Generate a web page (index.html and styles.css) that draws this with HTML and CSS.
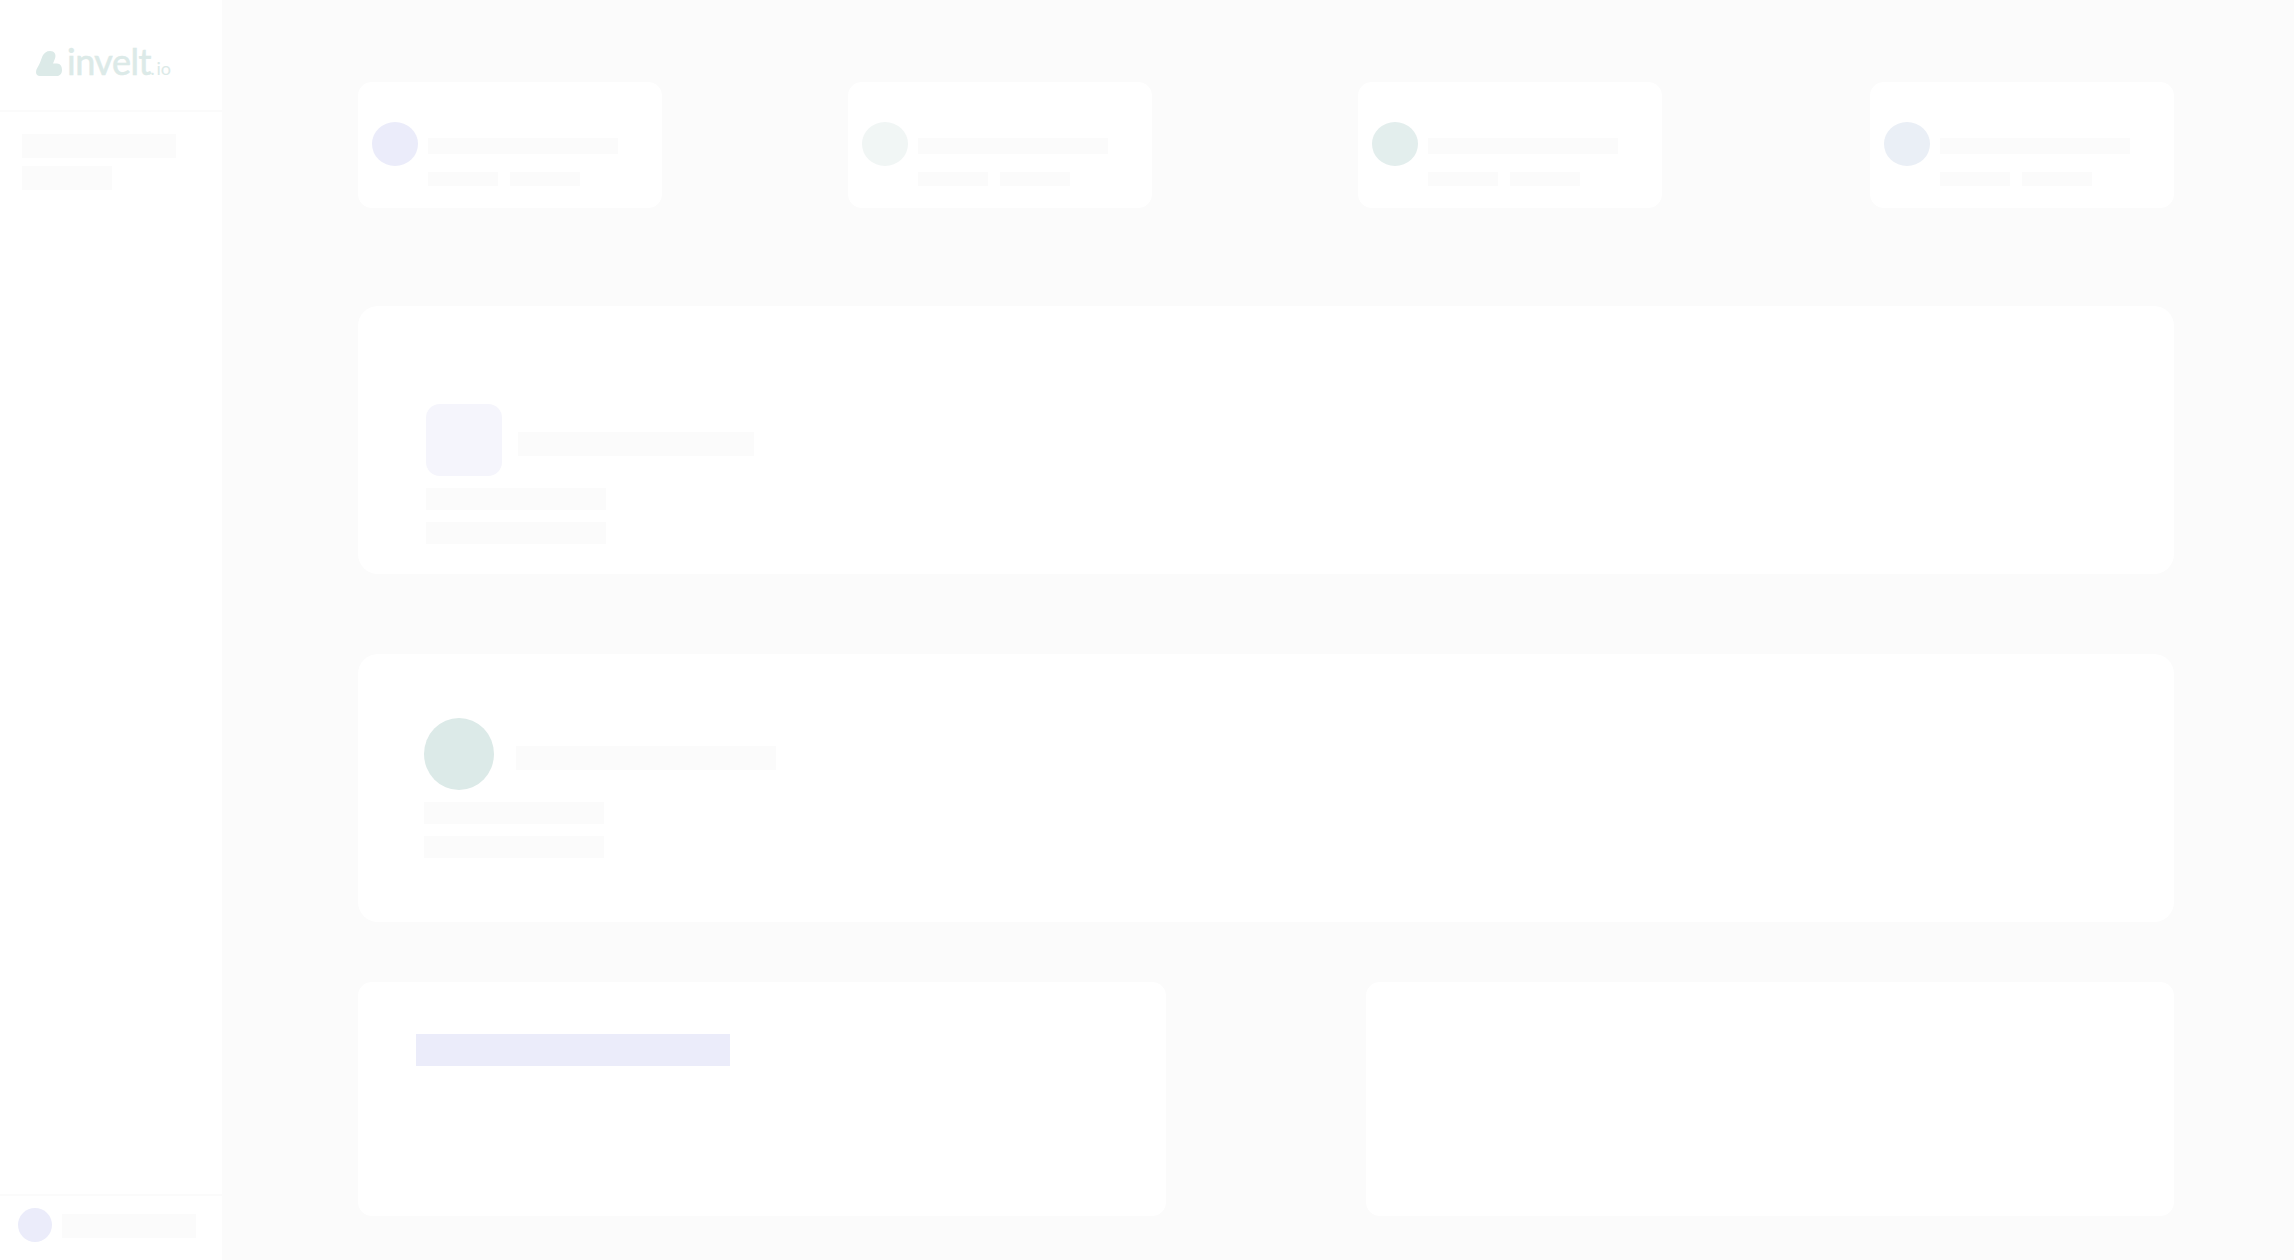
FILE: index.html
```html
<!DOCTYPE html>
<html lang="en">
<head>
    <meta charset="UTF-8">
    <meta name="viewport" content="width=device-width, initial-scale=1.0">
    <title>invelt.io</title>
    <link rel="stylesheet" href="styles.css">
</head>
<body>
    <aside class="sidebar">
        <div class="sidebar-logo">
            <svg class="logo-icon" width="26" height="25" viewBox="0 0 26 25">
                <path d="M6.500 5C8 2 10.500 0 14 0C18.500 0 20.500 3.500 19 7.500L17 12.500H21C24.500 12.500 26 15.500 26 19C26 22.500 24 25 21 25H4C1.500 25 0 23.500 0 21C0 19.500 0.500 18 1.500 16.500C3.500 13.500 5 9 6.500 5Z"/>
            </svg>
            <span class="logo-name">invelt</span><span class="logo-dot">.</span><span class="logo-tld">io</span>
        </div>
        <div class="sidebar-nav">
            <div class="skeleton nav-line-long"></div>
            <div class="skeleton nav-line-short"></div>
        </div>
        <div class="sidebar-user">
            <div class="user-avatar"></div>
            <div class="skeleton user-name"></div>
        </div>
    </aside>

    <main class="content">
        <div class="stat-row">
            <div class="stat-card">
                <div class="stat-icon stat-icon-lavender"></div>
                <div class="stat-text">
                    <div class="skeleton stat-title"></div>
                    <div class="stat-tags">
                        <div class="skeleton stat-tag"></div>
                        <div class="skeleton stat-tag"></div>
                    </div>
                </div>
            </div>
            <div class="stat-card">
                <div class="stat-icon stat-icon-mint"></div>
                <div class="stat-text">
                    <div class="skeleton stat-title"></div>
                    <div class="stat-tags">
                        <div class="skeleton stat-tag"></div>
                        <div class="skeleton stat-tag"></div>
                    </div>
                </div>
            </div>
            <div class="stat-card">
                <div class="stat-icon stat-icon-teal"></div>
                <div class="stat-text">
                    <div class="skeleton stat-title"></div>
                    <div class="stat-tags">
                        <div class="skeleton stat-tag"></div>
                        <div class="skeleton stat-tag"></div>
                    </div>
                </div>
            </div>
            <div class="stat-card">
                <div class="stat-icon stat-icon-blue"></div>
                <div class="stat-text">
                    <div class="skeleton stat-title"></div>
                    <div class="stat-tags">
                        <div class="skeleton stat-tag"></div>
                        <div class="skeleton stat-tag"></div>
                    </div>
                </div>
            </div>
        </div>

        <section class="panel panel-first">
            <div class="panel-head">
                <div class="panel-square"></div>
                <div class="skeleton panel-title-short"></div>
            </div>
            <div class="skeleton panel-line"></div>
            <div class="skeleton panel-line"></div>
        </section>

        <section class="panel panel-second">
            <div class="panel-head">
                <div class="panel-circle"></div>
                <div class="skeleton panel-title-long"></div>
            </div>
            <div class="skeleton panel-line"></div>
            <div class="skeleton panel-line"></div>
        </section>

        <div class="bottom-row">
            <section class="bottom-card bottom-card-titled">
                <div class="bottom-title"></div>
            </section>
            <section class="bottom-card"></section>
        </div>
    </main>
</body>
</html>
```
FILE: styles.css
```css
body {
    margin: 0;
    height: 100vh;
    display: flex;
    overflow: hidden;
    background-color: #fbfbfb;
    font-family: Lato, sans-serif;
}

.skeleton {
    background-color: #fbfbfb;
}

/* sidebar */
.sidebar {
    width: 222px;
    flex-shrink: 0;
    display: flex;
    flex-direction: column;
    background-color: #ffffff;
}
.sidebar-logo {
    height: 110px;
    box-sizing: content-box;
    display: flex;
    align-items: baseline;
    padding-left: 36px;
    border-bottom: 2px solid #fbfbfb;
    color: #dceae8;
    line-height: 122px;
}
.logo-icon {
    align-self: flex-start;
    margin-top: 51px;
    margin-right: 5px;
    fill: #dceae8;
}
.logo-name {
    font-size: 36px;
    font-weight: 400;
    letter-spacing: -0.5px;
    -webkit-text-stroke: 0.6px #dceae8;
}
.logo-dot {
    font-size: 15px;
    font-weight: 700;
    margin-right: 2px;
}
.logo-tld {
    font-size: 18px;
    font-weight: 400;
}
.sidebar-nav {
    display: flex;
    flex-direction: column;
    gap: 8px;
    padding: 22px;
}
.nav-line-long {
    width: 154px;
    height: 24px;
}
.nav-line-short {
    width: 90px;
    height: 24px;
}
.sidebar-user {
    margin-top: auto;
    height: 52px;
    display: flex;
    gap: 10px;
    padding: 12px 18px 0;
    border-top: 2px solid #fbfbfb;
}
.user-avatar {
    width: 34px;
    height: 34px;
    border-radius: 50%;
    background-color: #ebecfa;
}
.user-name {
    width: 134px;
    height: 24px;
    margin-top: 6px;
}

/* main area */
.content {
    flex: 1;
    padding: 82px 120px 0 136px;
}
.stat-row {
    display: grid;
    grid-template-columns: 490px 510px 512px 304px;
}
.stat-card {
    width: 304px;
    height: 126px;
    box-sizing: border-box;
    display: flex;
    gap: 10px;
    padding: 40px 14px 0;
    border-radius: 14px;
    background-color: #ffffff;
}
.stat-icon {
    width: 46px;
    height: 44px;
    border-radius: 50%;
}
.stat-icon-lavender {
    background-color: #ebecfa;
}
.stat-icon-mint {
    background-color: #f1f6f5;
}
.stat-icon-teal {
    background-color: #e3eeed;
}
.stat-icon-blue {
    background-color: #eaeff6;
}
.stat-text {
    display: flex;
    flex-direction: column;
    gap: 18px;
    padding-top: 16px;
}
.stat-title {
    width: 190px;
    height: 16px;
}
.stat-tags {
    display: flex;
    gap: 12px;
}
.stat-tag {
    width: 70px;
    height: 14px;
}

.panel {
    height: 268px;
    box-sizing: border-box;
    border-radius: 20px;
    background-color: #ffffff;
}
.panel-first {
    margin-top: 98px;
    padding: 98px 0 0 68px;
}
.panel-second {
    margin-top: 80px;
    padding: 64px 0 0 66px;
}
.panel-head {
    display: flex;
    align-items: flex-end;
    gap: 16px;
    margin-bottom: 12px;
}
.panel-square {
    width: 76px;
    height: 72px;
    border-radius: 14px;
    background-color: #f5f5fc;
}
.panel-circle {
    width: 70px;
    height: 72px;
    margin-right: 6px;
    border-radius: 50%;
    background-color: #dceae8;
}
.panel-title-short {
    width: 236px;
    height: 24px;
    margin-bottom: 20px;
}
.panel-title-long {
    width: 260px;
    height: 24px;
    margin-bottom: 20px;
}
.panel-line {
    width: 180px;
    height: 22px;
    margin-bottom: 12px;
}

.bottom-row {
    display: flex;
    justify-content: space-between;
    margin-top: 60px;
}
.bottom-card {
    width: 808px;
    height: 234px;
    box-sizing: border-box;
    border-radius: 14px;
    background-color: #ffffff;
}
.bottom-card-titled {
    padding: 52px 0 0 58px;
}
.bottom-title {
    width: 314px;
    height: 32px;
    background-color: #ebecfa;
}
```
